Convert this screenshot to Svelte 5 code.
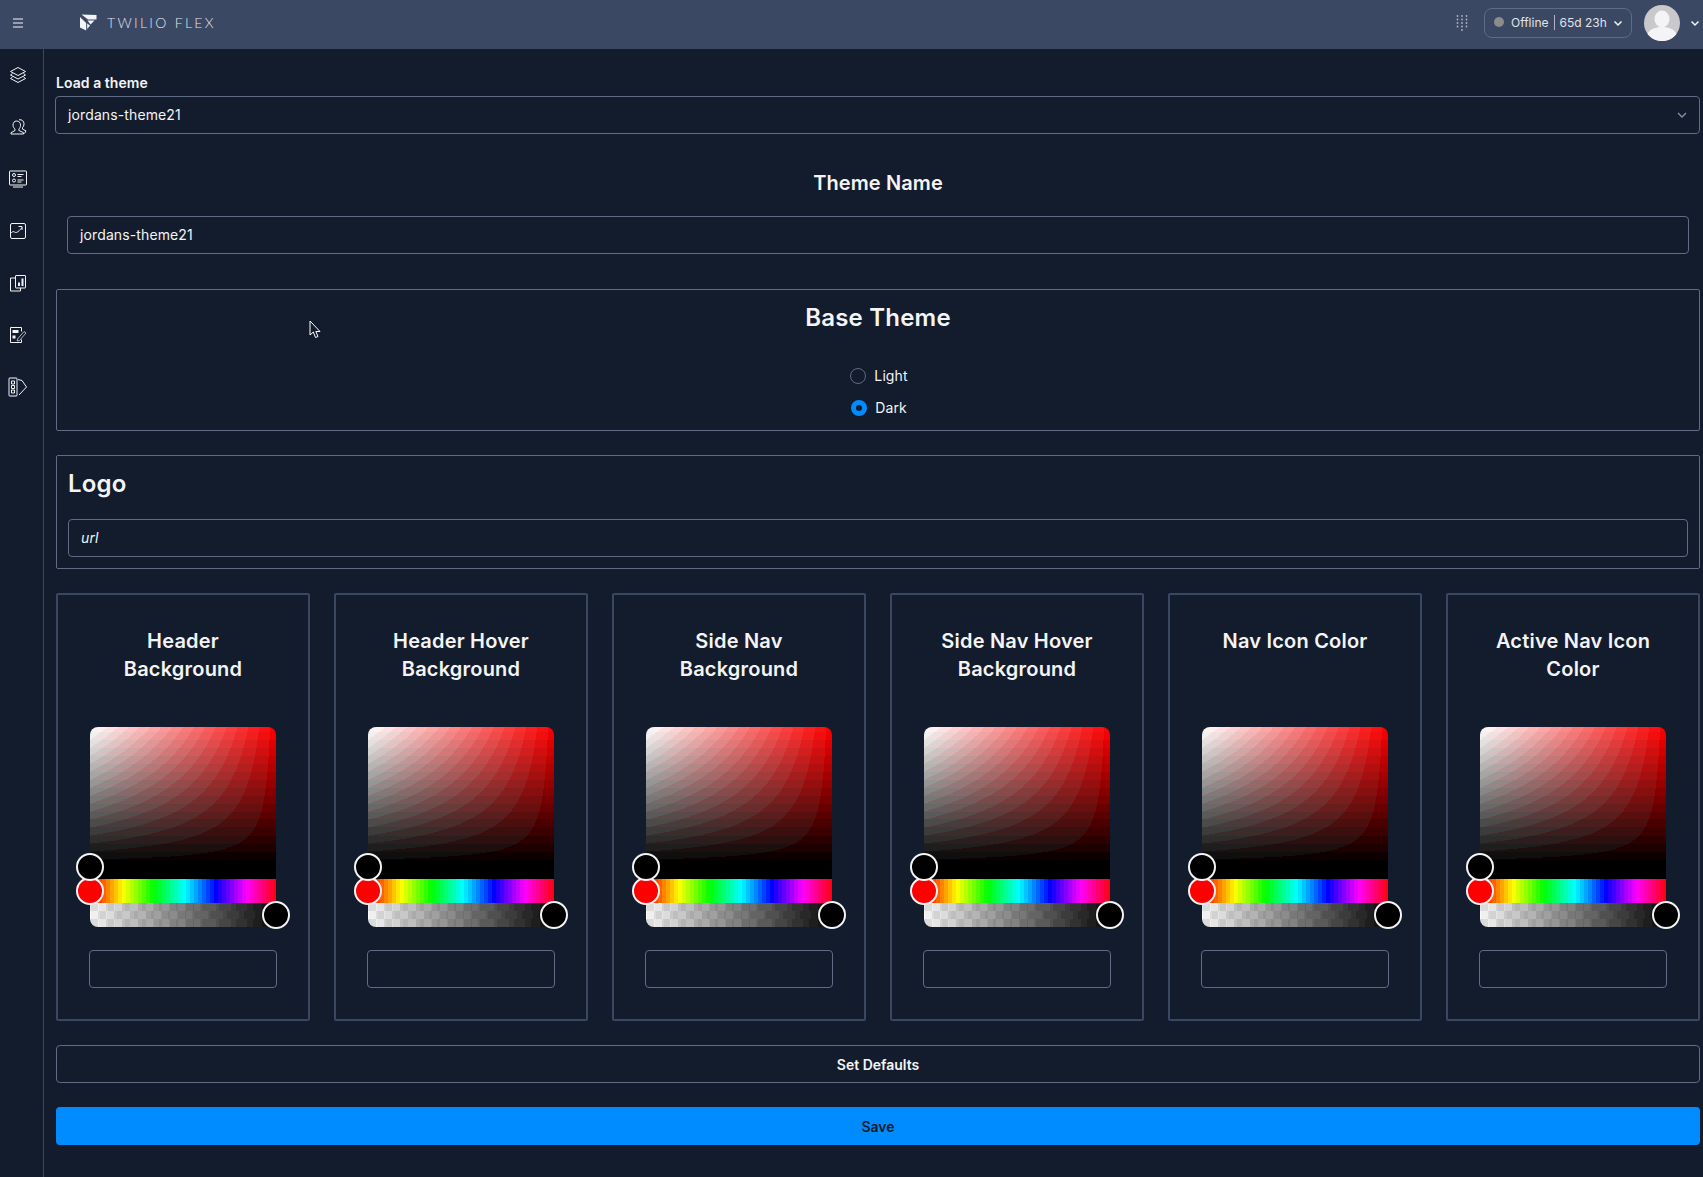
<script>
  const cards = [
    ['Header', 'Background'],
    ['Header Hover', 'Background'],
    ['Side Nav', 'Background'],
    ['Side Nav Hover', 'Background'],
    ['Nav Icon Color'],
    ['Active Nav Icon', 'Color']
  ];

  const q = (v, n) => Math.round(Math.round((v / 255) * n) / n * 255);

  function put(ctx, x, y, r, g, b) {
    ctx.fillStyle = `rgb(${r},${g},${b})`;
    ctx.fillRect(x, y, 1, 1);
  }

  function paintSat(canvas) {
    const ctx = canvas.getContext('2d');
    const w = canvas.width, h = canvas.height;
    for (let y = 0; y < h; y++) {
      for (let x = 0; x < w; x++) {
        const s = x / (w - 1);
        const v = Math.max(0, 1 - y / 136);
        const c = 255 * v;
        const g = c * (1 - s);
        put(ctx, x, y, q(c, 17), q(g, 17), q(g, 17));
      }
    }
  }

  function paintHue(canvas) {
    const ctx = canvas.getContext('2d');
    const w = canvas.width, h = canvas.height;
    for (let x = 0; x < w; x++) {
      const t = (Math.floor(x / 4) * 4 / w) * 6;
      const f = (n) => {
        const k = (n + t) % 6;
        return 255 * (1 - Math.max(0, Math.min(k, 4 - k, 1)));
      };
      ctx.fillStyle = `rgb(${f(5)},${f(3)},${f(1)})`;
      ctx.fillRect(x, 0, 1, h);
    }
  }

  function paintAlpha(canvas) {
    const ctx = canvas.getContext('2d');
    const w = canvas.width, h = canvas.height;
    for (let y = 0; y < h; y++) {
      for (let x = 0; x < w; x++) {
        const a = x / (w - 1);
        const check = (Math.floor(x / 8) + Math.floor(y / 8)) % 2 ? 246 : 226;
        const v = Math.round((check * (1 - a) + 8 * a) / 10) * 10;
        put(ctx, x, y, v, v, v);
      }
    }
  }
</script>

<div class="shell">
  <header class="top">
    <button class="menu" aria-label="Menu">
      <svg width="14" height="14" viewBox="0 0 14 14"><path d="M2 3h10M2 7h10M2 11h10" stroke="#f4f4f6" stroke-width="1"/></svg>
    </button>
    <div class="brand">
      <svg class="brand-mark" width="17" height="17" viewBox="0 0 17 17">
        <path d="M1.500 0.500 16.500 1V5.500H8Z" fill="#f4f4f6"/>
        <path d="M7.500 6.500H14.500L10.500 10.500Z" fill="#f4f4f6"/>
        <path d="M0 3 6.200 9V16.500L0 13.500Z" fill="#f4f4f6"/>
        <path d="M7.200 9.500 10 11.500 7.200 15Z" fill="#f4f4f6"/>
      </svg>
      <span class="brand-name">TWILIO FLEX</span>
    </div>
    <div class="top-right">
      <svg class="dots" width="12" height="16" viewBox="0 0 12 16">
        {#each [1, 4.5, 8, 11.5] as y}
          {#each [1.5, 6, 10.5] as x}
            <circle cx={x} cy={y} r="0.9" fill="#aeb2c1"/>
          {/each}
        {/each}
        <circle cx="6" cy="15" r="0.9" fill="#aeb2c1"/>
      </svg>
      <button class="status">
        <span class="status-dot"></span>
        <span>Offline</span>
        <span class="status-sep"></span>
        <span>65d 23h</span>
        <svg width="10" height="10" viewBox="0 0 10 10"><path d="M1.5 3.5 5 7l3.5-3.5" fill="none" stroke="#f4f4f6" stroke-width="1.5"/></svg>
      </button>
      <span class="avatar">
        <svg width="36" height="36" viewBox="0 0 36 36">
          <circle cx="18" cy="18" r="18" fill="#c9c9c9"/>
          <ellipse cx="18" cy="14" rx="7.5" ry="8.5" fill="#f4f4f6"/>
          <path d="M3.5 29 C6 24 11 22 18 22 C25 22 30 24 32.5 29 C29 33.5 24 36 18 36 C12 36 7 33.5 3.5 29Z" fill="#f4f4f6"/>
        </svg>
      </span>
      <svg class="avatar-caret" width="10" height="10" viewBox="0 0 10 10"><path d="M1.5 3.5 5 7l3.5-3.5" fill="none" stroke="#f4f4f6" stroke-width="1.5"/></svg>
    </div>
  </header>

  <div class="body">
    <nav class="side">
      <svg viewBox="0 0 18 18"><path d="M9 1.500 16.500 5.500 9 9.500 1.500 5.500Z"/><path d="M3.500 7.500 1.500 9 9 13l7.500-4-2-1.500"/><path d="M3.500 11 1.500 12.500 9 16.500l7.500-4-2-1.500"/></svg>
      <svg viewBox="-1 0 18 18"><path d="M6.500 3c2.600 0 4 1.800 4 4.200 0 1.700-.7 3-1.600 3.800v1.500l4.600 2.200v1.300H1v-1.300l4-2.200V11C4 10.200 3 8.900 3 7.200 3 4.800 4.300 3 6.500 3Z"/><path d="M9 1.800c3-.6 5 1.500 5 4 0 1.700-.6 3-1.500 3.800v1.500l3.500 1.800-1.500 2.600"/></svg>
      <svg viewBox="0 0 18 18"><rect x="0.500" y="1" width="17" height="14" rx="0.500"/><circle cx="5" cy="5" r="1.500"/><circle cx="5" cy="10.500" r="1.500"/><path d="M8.500 4.500h6M8.500 6.500h4M8.500 10h6M8.500 12h4M4 17h10"/></svg>
      <svg viewBox="0 0 18 18"><rect x="1.500" y="1.500" width="15" height="15" rx="1.500"/><path d="M1.500 11.500c1.500-1.500 2.500-2.500 4-1.500s3 1 7.500-4.500"/><path d="M9.500 4.500h3.500V8"/></svg>
      <svg viewBox="0 0 18 18"><path d="M6.500 4H1.500v13h10v-3"/><rect x="6.500" y="1.500" width="10" height="12.500" rx="0.500"/><path d="M10 12V8.500M13.500 12V4.500" stroke-width="2"/></svg>
      <svg viewBox="0 0 18 18"><path d="M12.500 5.500V1.500h-11v15h11v-3"/><rect x="3.500" y="4" width="6" height="3" fill="#f4f4f6" stroke="none"/><rect x="3.500" y="9.500" width="3" height="3" fill="#f4f4f6" stroke="none"/><path d="M8.500 13 15 5.500l2 1.500-6.500 7.500-2.300.5Z" stroke="#aeb2c1"/></svg>
      <svg class="fan" viewBox="0 0 20 20"><rect x="1" y="1" width="8" height="18" rx="1.200" stroke="#aeb2c1" stroke-width="1.400"/><path d="M3.500 4h3v3h-3ZM3.500 8.500h3v3h-3ZM3.500 13h3v3h-3Z"/><path d="M10 2.500 14 3.500 18.500 10 11 18"/></svg>
    </nav>

    <main class="main">
      <label class="load-label" for="load">Load a theme</label>
      <div class="field select" id="load">
        <span>jordans-theme21</span>
        <svg width="10" height="10" viewBox="0 0 10 10"><path d="M1 3 5 7l4-4" fill="none" stroke="#8891aa" stroke-width="1.300"/></svg>
      </div>

      <h3 class="theme-name">Theme Name</h3>
      <div class="theme-input"><div class="field">jordans-theme21</div></div>

      <section class="box base">
        <h2>Base Theme</h2>
        <div class="radios">
          <div class="radio"><span class="dot"></span>Light</div>
          <div class="radio dark"><span class="dot on"></span>Dark</div>
        </div>
      </section>

      <section class="box logo">
        <h2>Logo</h2>
        <div class="field url">url</div>
      </section>

      <div class="cards">
        {#each cards as lines}
          <article class="card">
            <h3>
              {#each lines as line}<span>{line}</span>{/each}
            </h3>
            <div class="picker">
              <div class="clip">
                <canvas width="186" height="152" use:paintSat></canvas>
                <canvas width="186" height="24" use:paintHue></canvas>
                <canvas width="186" height="24" use:paintAlpha></canvas>
              </div>
              <span class="handle h-sat"></span>
              <span class="handle h-hue"></span>
              <span class="handle h-alpha"></span>
            </div>
            <div class="field color"></div>
          </article>
        {/each}
      </div>

      <button class="btn">Set Defaults</button>
      <button class="btn save">Save</button>
    </main>
  </div>

  <svg class="cursor" width="14" height="20" viewBox="0 0 14 20">
    <path d="M1 1V15L4.300 12 6.500 17.500 9 16.500 6.800 11.500H11Z" fill="#121c2d" stroke="#fff" stroke-width="1"/>
  </svg>
</div>

<style>
  :global(body) {
    margin: 0;
    background: #121c2d;
    font-family: Inter, "Liberation Sans", sans-serif;
    color: #f4f4f6;
  }
  .shell {
    position: relative;
    width: 1703px;
    height: 1177px;
    overflow: hidden;
    background: #121c2d;
  }
  .top {
    display: flex;
    align-items: center;
    height: 49px;
    padding-bottom: 4px;
    background: #3a4864;
    box-sizing: border-box;
  }
  .menu {
    display: flex;
    width: 36px;
    justify-content: center;
    padding: 0;
    border: 0;
    background: none;
  }
  .brand {
    display: flex;
    align-items: center;
    margin-left: 44px;
    gap: 10px;
  }
  .brand-name {
    font-family: Lato, sans-serif;
    font-weight: 300;
    font-size: 14px;
    letter-spacing: 2.3px;
    color: #e1e3ea;
  }
  .top-right {
    display: flex;
    align-items: center;
    margin-left: auto;
    padding-right: 3px;
  }
  .dots {
    margin-right: 16px;
  }
  .status {
    display: flex;
    align-items: center;
    width: 148px;
    height: 30px;
    box-sizing: border-box;
    padding: 0 8px 0 9px;
    border: 1px solid #606b85;
    border-radius: 8px;
    background: none;
    color: #e1e3ea;
    font: 400 12px Inter, sans-serif;
    margin-right: 12px;
    white-space: nowrap;
  }
  .status-dot {
    width: 10px;
    height: 10px;
    border-radius: 50%;
    background: #8c8c8c;
    margin: -2px 7px 0 0;
  }
  .status-sep {
    width: 1px;
    height: 15px;
    background: #aeb2c1;
    margin: 0 5px;
  }
  .status svg {
    margin-left: 6px;
  }
  .avatar {
    display: flex;
  }
  .avatar-caret {
    margin: 0 0 0 10px;
    flex: none;
  }
  .avatar svg {
    display: block;
  }
  .body {
    display: flex;
    height: 1128px;
  }
  .side {
    flex: none;
    border-right: 1px solid #394762;
    display: flex;
    flex-direction: column;
    align-items: center;
    gap: 34px;
    padding: 17px 7px 0 0;
    box-sizing: content-box;
    width: 36px;
  }
  .side svg {
    width: 18px;
    height: 18px;
    fill: none;
    stroke: #f4f4f6;
    stroke-width: 1;
    stroke-linejoin: round;
  }
  .side svg.fan {
    width: 20px;
    height: 20px;
    margin-top: -1px;
  }
  .main {
    flex: 1;
    min-width: 0;
    padding: 24px 3px 0 12px;
    display: flex;
    flex-direction: column;
  }
  .load-label {
    font-size: 14px;
    font-weight: 600;
    line-height: 20px;
    margin-bottom: 3px;
    letter-spacing: 0.05px;
  }
  .field {
    height: 38px;
    box-sizing: border-box;
    border: 1px solid #606b85;
    border-radius: 4px;
    font-size: 14px;
    line-height: 36px;
    padding: 0 12px;
    color: #f4f4f6;
    letter-spacing: 0.12px;
  }
  .select {
    display: flex;
    align-items: center;
    justify-content: space-between;
    margin-left: -1px;
  }
  .theme-name {
    margin: 35px 0 19px;
    font-size: 20px;
    line-height: 28px;
    font-weight: 600;
    text-align: center;
    letter-spacing: 0.1px;
  }
  .theme-input {
    padding: 0 11px;
    margin-bottom: 35px;
  }
  .box {
    border: 1px solid #606b85;
    border-radius: 2px;
    box-sizing: border-box;
  }
  .box h2 {
    margin: 0;
    font-size: 24px;
    line-height: 32px;
    font-weight: 600;
    letter-spacing: 0.2px;
  }
  .base {
    height: 142px;
    margin-bottom: 24px;
    padding-top: 12px;
    text-align: center;
  }
  .radios {
    display: flex;
    flex-direction: column;
    align-items: center;
    margin: 32px 0 0 2px;
    gap: 12px;
  }
  .radio {
    display: flex;
    align-items: center;
    gap: 8px;
    font-size: 14px;
    line-height: 20px;
    letter-spacing: 0.1px;
  }
  .dot {
    box-sizing: border-box;
    width: 16px;
    height: 16px;
    border-radius: 50%;
    border: 1px solid #606b85;
  }
  .dot.on {
    border: 5px solid #008cff;
    background: #121c2d;
  }
  .logo {
    height: 114px;
    margin-bottom: 24px;
    padding: 12px 11px 0 11px;
  }
  .url {
    margin-top: 19px;
    font-style: italic;
  }
  .cards {
    display: grid;
    grid-template-columns: repeat(6, 254px);
    gap: 24px;
  }
  .card {
    box-sizing: border-box;
    height: 428px;
    border: 2px solid #394762;
    border-radius: 2px;
    padding: 32px 32px 0;
    display: flex;
    flex-direction: column;
  }
  .card h3 {
    margin: 0;
    height: 100px;
    font-size: 20px;
    line-height: 28px;
    font-weight: 600;
    text-align: center;
    white-space: nowrap;
    letter-spacing: 0.2px;
  }
  .card h3 span {
    display: block;
  }
  .picker {
    position: relative;
    width: 186px;
    height: 200px;
    margin: 0 auto 23px;
  }
  .clip {
    display: flex;
    flex-direction: column;
    border-radius: 8px;
    overflow: hidden;
  }
  .clip canvas {
    display: block;
  }
  .handle {
    position: absolute;
    box-sizing: border-box;
    width: 28px;
    height: 28px;
    border-radius: 50%;
    border: 2px solid #f4f4f6;
  }
  .h-sat {
    left: -14px;
    top: 126px;
    background: #000;
    z-index: 2;
  }
  .h-hue {
    left: -14px;
    top: 150px;
    background: #f00;
  }
  .h-alpha {
    right: -14px;
    top: 174px;
    background: #000;
  }
  .color {
    width: 188px;
    margin: 0 0 0 -1px;
  }
  .btn {
    height: 38px;
    margin-top: 24px;
    border: 1px solid #606b85;
    border-radius: 4px;
    background: none;
    color: #f4f4f6;
    font: 600 14px Inter, sans-serif;
  }
  .save {
    margin-top: 24px;
    border: 0;
    background: #008cff;
    color: #121c2d;
  }
  .cursor {
    position: absolute;
    left: 309px;
    top: 320px;
  }
</style>
